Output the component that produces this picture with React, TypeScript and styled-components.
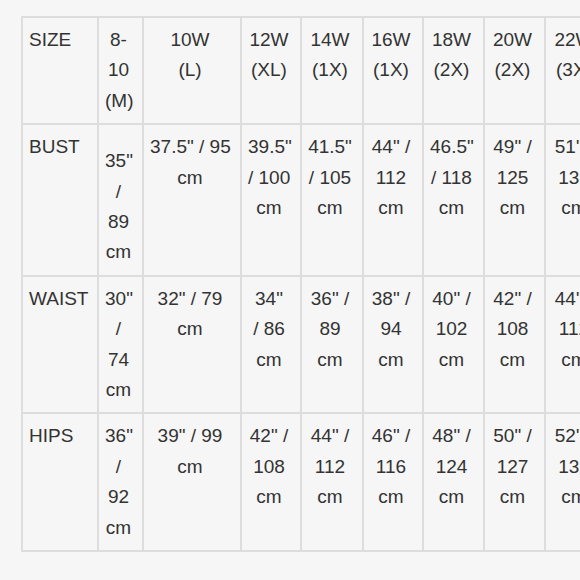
import React from 'react';
import styled, { createGlobalStyle } from 'styled-components';

const GlobalStyle = createGlobalStyle`
  html, body {
    margin: 0;
    padding: 0;
    background-color: #f6f6f6;
  }
`;

const Page = styled.div`
  width: 580px;
  height: 580px;
  overflow: hidden;
  padding: 16px 0 0 21px;
  box-sizing: border-box;
  background-color: #f6f6f6;
`;

const SizeTable = styled.table`
  table-layout: fixed;
  border-collapse: separate;
  border-spacing: 0;
  width: 587px;
  border-top: 2px solid #dddddd;
  border-left: 2px solid #dddddd;
  font-family: 'Liberation Sans', Arial, sans-serif;
  font-size: 19px;
  line-height: 30.4px;
  color: #333333;
`;

const Cell = styled.td<{ $label?: boolean; $width?: number; $offset?: number }>`
  box-sizing: border-box;
  width: ${(p) => (p.$width ? `${p.$width}px` : 'auto')};
  padding: ${(p) => 7 + (p.$offset || 0)}px 10px 7px 6px;
  border-right: 2px solid #dddddd;
  border-bottom: 2px solid #dddddd;
  vertical-align: top;
  text-align: ${(p) => (p.$label ? 'left' : 'center')};
  white-space: nowrap;
  font-weight: normal;
`;

const widths = [76, 45, 98, 60, 62, 60, 61, 61, 62];

type Row = { label: string; cells: string[][]; offset?: number[] };

const rows: Row[] = [
  {
    label: 'SIZE',
    cells: [
      ['8-', '10', '(M)'],
      ['10W', '(L)'],
      ['12W', '(XL)'],
      ['14W', '(1X)'],
      ['16W', '(1X)'],
      ['18W', '(2X)'],
      ['20W', '(2X)'],
      ['22W', '(3X)'],
    ],
  },
  {
    label: 'BUST',
    offset: [14],
    cells: [
      ['35"', '/', '89', 'cm'],
      ['37.5" / 95', 'cm'],
      ['39.5"', '/ 100', 'cm'],
      ['41.5"', '/ 105', 'cm'],
      ['44" /', '112', 'cm'],
      ['46.5"', '/ 118', 'cm'],
      ['49" /', '125', 'cm'],
      ['51" /', '131', 'cm'],
    ],
  },
  {
    label: 'WAIST',
    cells: [
      ['30"', '/', '74', 'cm'],
      ['32" / 79', 'cm'],
      ['34"', '/ 86', 'cm'],
      ['36" /', '89', 'cm'],
      ['38" /', '94', 'cm'],
      ['40" /', '102', 'cm'],
      ['42" /', '108', 'cm'],
      ['44" /', '112', 'cm'],
    ],
  },
  {
    label: 'HIPS',
    cells: [
      ['36"', '/', '92', 'cm'],
      ['39" / 99', 'cm'],
      ['42" /', '108', 'cm'],
      ['44" /', '112', 'cm'],
      ['46" /', '116', 'cm'],
      ['48" /', '124', 'cm'],
      ['50" /', '127', 'cm'],
      ['52" /', '132', 'cm'],
    ],
  },
];

const Lines = ({ lines }: { lines: string[] }) => (
  <>
    {lines.map((line, i) => (
      <React.Fragment key={i}>
        {i > 0 && <br />}
        {line}
      </React.Fragment>
    ))}
  </>
);

const App = () => {
  return (
    <Page>
      <GlobalStyle />
      <SizeTable>
        <tbody>
          {rows.map((row, r) => (
            <tr key={row.label}>
              <Cell $label $width={r === 0 ? widths[0] : undefined}>
                {row.label}
              </Cell>
              {row.cells.map((lines, c) => (
                <Cell
                  key={c}
                  $width={r === 0 ? widths[c + 1] : undefined}
                  $offset={row.offset ? row.offset[c] : 0}
                >
                  <Lines lines={lines} />
                </Cell>
              ))}
            </tr>
          ))}
        </tbody>
      </SizeTable>
    </Page>
  );
};

export default App;
